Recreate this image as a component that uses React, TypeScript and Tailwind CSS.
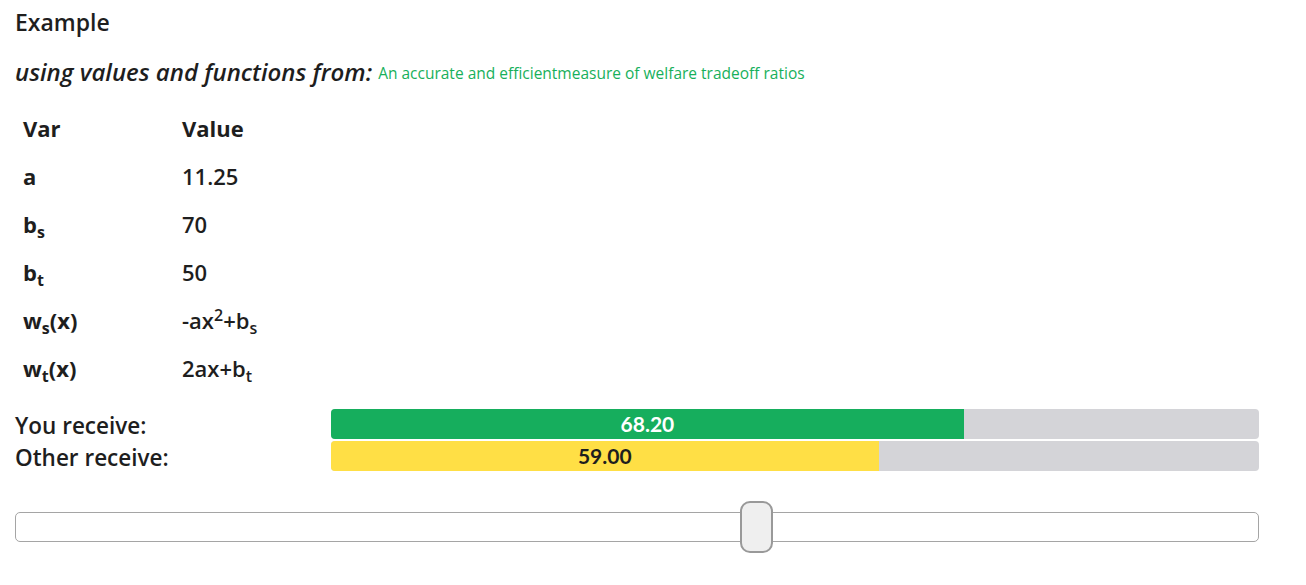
import React from "react";

const font = { fontFamily: '"Open Sans", "Noto Sans", sans-serif' };

function Sub({ children }: { children: React.ReactNode }) {
  return <sub className="text-[16px] relative top-[5px]">{children}</sub>;
}

export default function App() {
  const rows: [React.ReactNode, React.ReactNode][] = [
    ["a", "11.25"],
    [<>b<Sub>s</Sub></>, "70"],
    [<>b<Sub>t</Sub></>, "50"],
    [<>w<Sub>s</Sub>(x)</>, <>-ax<sup className="text-[16px] relative -top-[8px]">2</sup>+b<Sub>s</Sub></>],
    [<>w<Sub>t</Sub>(x)</>, <>2ax+b<Sub>t</Sub></>],
  ];
  return (
    <div className="bg-white min-h-[585px] text-[#1e1e1e]" style={font}>
      <div className="pl-[15px] w-[1259px]">
        <div className="h-[44px] flex items-center text-[23px] font-semibold">Example</div>
        <div className="h-[56px] flex items-center">
          <span className="text-[24px] font-semibold italic">using values and functions from:</span>
          <span className="ml-[6px] text-[15.5px] text-[#17b05b] mt-[4px]">An accurate and efficientmeasure of welfare tradeoff ratios</span>
        </div>
        <table className="mt-[4px] border-collapse text-[22px]">
          <tbody>
            <tr className="h-[48px]">
              <td className="w-[167px] pl-[8px] font-bold">Var</td>
              <td className="font-bold">Value</td>
            </tr>
            {rows.map((r, i) => (
              <tr key={i} className="h-[48px]">
                <td className="pl-[8px] font-bold">{r[0]}</td>
                <td className="font-semibold">{r[1]}</td>
              </tr>
            ))}
          </tbody>
        </table>
        <div className="mt-[17px] flex flex-col gap-[2px]">
          <Bar label="You receive:" value={68.2} color="bg-[#16ae5d]" text="text-white" />
          <Bar label="Other receive:" value={59} color="bg-[#ffdf45]" text="text-[#1e1e1e]" />
        </div>
        <div className="mt-[30px] relative h-[52px] flex items-center">
          <div className="w-full h-[30px] border border-[#a5a5a5] rounded-[5px] bg-white" />
          <div className="absolute left-[725px] top-0 w-[33px] h-[52px] rounded-[10px] border-2 border-[#999999] bg-[#efefef]" />
        </div>
      </div>
    </div>
  );
}

function Bar({ label, value, color, text }: { label: string; value: number; color: string; text: string }) {
  return (
    <div className="flex items-center h-[30px]">
      <div className="w-[316px] text-[22.5px] font-semibold pt-[3px]">{label}</div>
      <div className="flex-1 h-[30px] bg-[#d4d4d8] rounded-[4px] overflow-hidden">
        <div
          className={`h-full ${color} ${text} flex items-center justify-center text-[21px] font-bold`}
          style={{ width: `${value}%`, fontFamily: "Lato, sans-serif" }}
        >
          {value.toFixed(2)}
        </div>
      </div>
    </div>
  );
}
